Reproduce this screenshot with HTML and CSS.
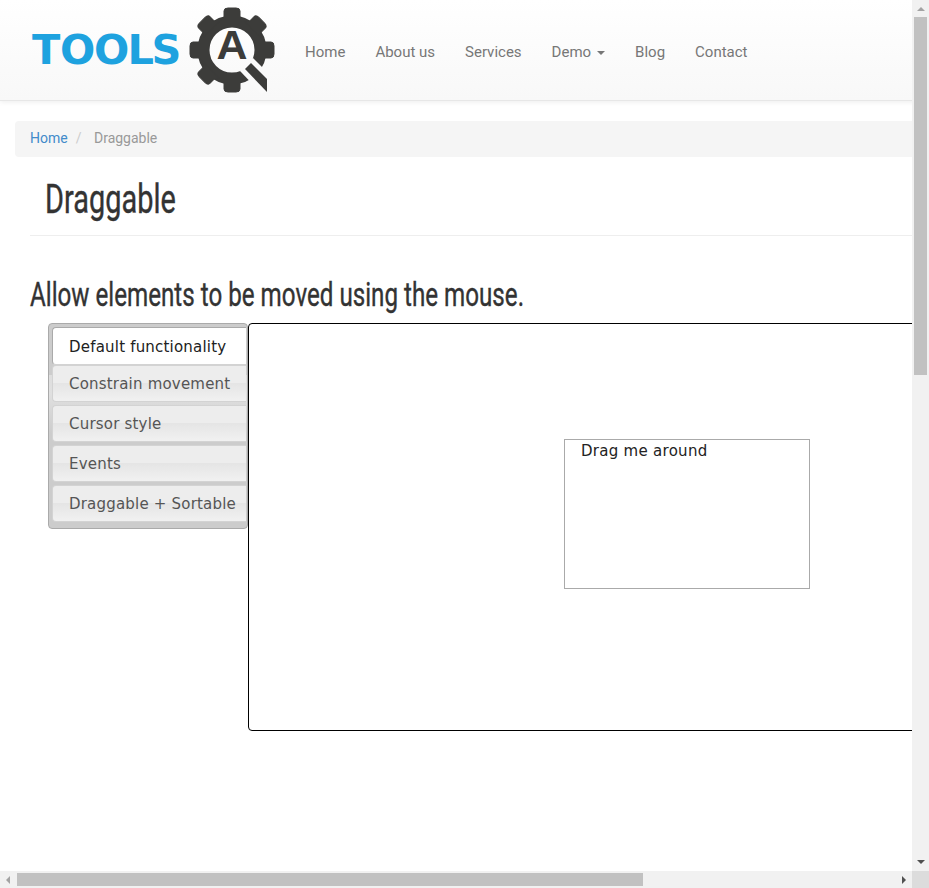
FILE: index.html
```html
<!DOCTYPE html>
<html lang="en">
<head>
<meta charset="utf-8">
<title>Draggable</title>
<link rel="stylesheet" href="styles.css">
</head>
<body>
<div class="viewport">
  <header class="navbar">
    <svg class="logo" width="245" height="100" viewBox="30 0 245 100">
      <text class="wordmark" x="32 60 94 127.500 151.500" y="64">TOOLS</text>
      <g class="emblem">
        <circle cx="232" cy="50" r="28.500" fill="none" stroke-width="12"/>
        <g stroke-width="1" stroke-linejoin="round">
          <path id="tooth" d="M221 21L224 17V11Q224 8 228 8H236Q240 8 240 11V17L244 21Z"/>
          <use href="#tooth" transform="rotate(45 232 50)"/>
          <use href="#tooth" transform="rotate(90 232 50)"/>
          <use href="#tooth" transform="rotate(180 232 50)"/>
          <use href="#tooth" transform="rotate(225 232 50)"/>
          <use href="#tooth" transform="rotate(270 232 50)"/>
          <use href="#tooth" transform="rotate(315 232 50)"/>
        </g>
        <path class="cut" d="M240 71L253 58L268 73V88L262 94Z"/>
        <path d="M245 69L251 63L267 79V92Z" stroke="none"/>
        <text class="initial" x="216.500" y="59" textLength="31" lengthAdjust="spacingAndGlyphs">A</text>
      </g>
    </svg>
    <nav class="menu">
      <a>Home</a><a>About us</a><a>Services</a><a>Demo<i class="caret"></i></a><a>Blog</a><a>Contact</a>
    </nav>
  </header>
  <main>
    <div class="breadcrumb"><a>Home</a><span class="slash">/</span><span>Draggable</span></div>
    <h1><span>Draggable</span></h1>
    <h2><span>Allow elements to be moved using the mouse.</span></h2>
    <section class="tabs">
      <ul class="tablist">
        <li class="active">Default functionality</li>
        <li>Constrain movement</li>
        <li>Cursor style</li>
        <li>Events</li>
        <li>Draggable + Sortable</li>
      </ul>
      <div class="panel"><div class="draggable">Drag me around</div></div>
    </section>
  </main>
</div>
<div class="vbar"><i class="arrow up"></i><i class="thumb"></i><i class="arrow down"></i></div>
<div class="hbar"><i class="arrow left"></i><i class="thumb"></i><i class="arrow right"></i></div>
<div class="corner"></div>
</body>
</html>
```
FILE: styles.css
```css
* { box-sizing: border-box; }
body {
  margin: 0;
  width: 929px;
  height: 888px;
  display: grid;
  grid-template: 871px 17px / 912px 17px;
  overflow: hidden;
  background: #fff;
  font-family: Roboto, sans-serif;
}
.viewport { overflow: hidden; grid-area: 1 / 1; }
.navbar {
  display: flex;
  width: 1300px;
  height: 101px;
  padding-left: 30px;
  background: linear-gradient(#fff, #f8f8f8);
  border-bottom: 1px solid #e7e7e7;
  box-shadow: 0 1px 5px rgba(0, 0, 0, .075);
}
.logo { flex: none; }
.wordmark { font: bold 41.5px "DejaVu Sans", sans-serif; fill: #1ea2df; }
.emblem { fill: #3c3c3a; stroke: #3c3c3a; }
.emblem .cut { fill: #fafafa; stroke: none; }
.initial { font: bold 40px "Liberation Sans", sans-serif; stroke: none; }
.menu { display: flex; padding: 42px 0 0 15px; }
.menu a {
  height: 20px;
  padding: 0 15px;
  font-size: 15px;
  line-height: 20px;
  color: #777;
  white-space: nowrap;
}
.caret {
  display: inline-block;
  margin-left: 6px;
  vertical-align: middle;
  border-top: 4px solid #777;
  border-left: 4px solid transparent;
  border-right: 4px solid transparent;
}
main { width: 1300px; padding: 20px 0 0 15px; }
.breadcrumb {
  height: 36px;
  padding: 7px 15px;
  border-radius: 4px;
  background: #f5f5f5;
  font-size: 14px;
  line-height: 20px;
  color: #999;
}
.breadcrumb a { color: #428bca; }
.slash { padding: 0 12.5px 0 8px; color: #ccc; }
h1, h2 {
  margin: 0;
  font-weight: 400;
  color: #333;
  white-space: nowrap;
  -webkit-text-stroke: .4px #333;
}
h1 span, h2 span { display: inline-block; transform-origin: 0 50%; }
h1 {
  height: 79px;
  margin-left: 15px;
  padding: 19px 0 0 15px;
  border-bottom: 1px solid #eee;
  font-size: 40px;
  line-height: 48px;
}
h1 span { transform: scaleX(.723); }
h2 {
  height: 87px;
  padding: 38px 0 0 15px;
  font-size: 34px;
  line-height: 40px;
}
h2 span { transform: scaleX(.711); }
.tabs {
  display: flex;
  align-items: flex-start;
  padding-left: 33px;
  font: 15px "DejaVu Sans", sans-serif;
  letter-spacing: .2px;
}
.tablist {
  display: flex;
  flex-direction: column;
  gap: 3px;
  width: 200px;
  height: 206px;
  margin: 0;
  padding: 3px 1px 0 3px;
  border: 1px solid #aaa;
  border-radius: 4px;
  background: linear-gradient(#ccc 51px, #dedede 51px, #e0e0e0 70px, #ccc 110px);
  list-style: none;
}
.tablist li {
  height: 37.2px;
  padding-left: 16px;
  border: 1px solid #d3d3d3;
  border-right: 0;
  border-radius: 4px 0 0 4px;
  background: linear-gradient(#ededed 48%, #e5e5e5 50%, #f1f1f1);
  line-height: 37px;
  color: #555;
  white-space: nowrap;
}
.tablist .active {
  height: 37.5px;
  margin-bottom: -3px;
  border-color: #aaa;
  border-bottom-color: #d3d3d3;
  background: #fff;
  line-height: 38px;
  color: #212121;
}
.panel {
  width: 900px;
  height: 408px;
  padding: 115px 0 0 315px;
  border: 1px solid #000;
  border-radius: 4px;
}
.draggable {
  width: 246px;
  height: 150px;
  padding-left: 16px;
  border: 1px solid #aaa;
  line-height: 23px;
  letter-spacing: .28px;
  color: #222;
}
.vbar, .hbar { display: flex; align-items: center; background: #f1f1f1; }
.vbar { flex-direction: column; }
.thumb { flex: none; background: #c1c1c1; }
.vbar .thumb { width: 13px; height: 358px; margin-top: 6px; }
.hbar .thumb { width: 626px; height: 13px; margin-left: 7px; }
.arrow { width: 0; height: 0; border: 4px solid transparent; }
.up { margin-top: 3px; border-bottom-color: #a3a3a3; }
.down { margin: auto 0 7px; border-top-color: #505050; border-bottom: 0; }
.left { margin-left: 2px; border-right-color: #a3a3a3; }
.right { margin: 0 6px 0 auto; border-left-color: #505050; border-right: 0; }
.corner { background: #dcdcdc; }
```
